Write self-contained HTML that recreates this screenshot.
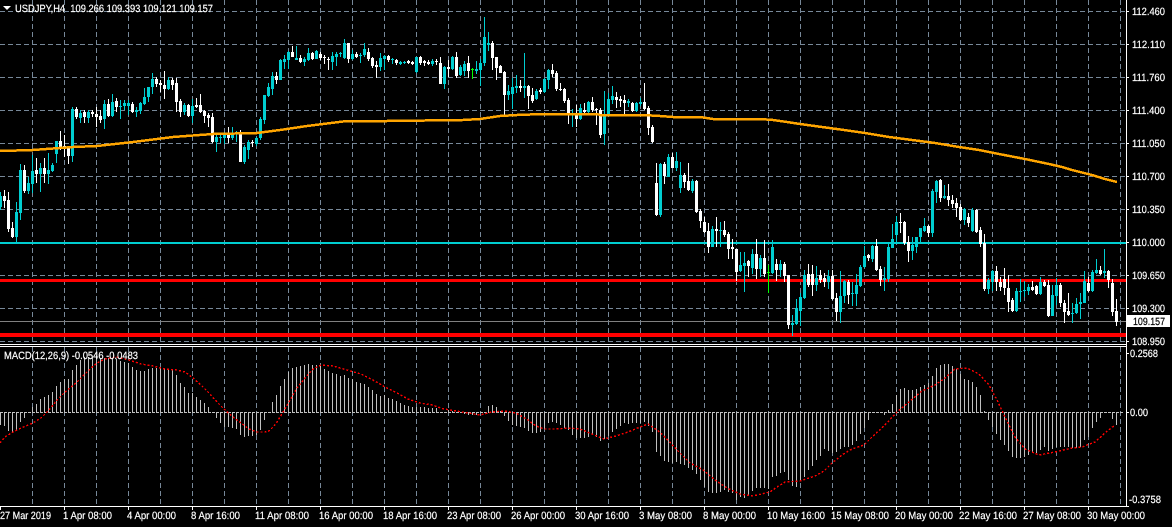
<!DOCTYPE html>
<html><head><meta charset="utf-8"><title>USDJPY,H4</title>
<style>html,body{margin:0;padding:0;background:#000;width:1172px;height:527px;overflow:hidden}svg{display:block}text{font-family:"Liberation Sans",sans-serif;font-size:10.5px;fill:#fff;stroke:#fff;stroke-width:.2;white-space:pre;text-rendering:geometricPrecision}</style></head><body>
<svg width="1172" height="527" viewBox="0 0 1172 527" xmlns="http://www.w3.org/2000/svg">
<rect width="1172" height="527" fill="#000"/>
<g shape-rendering="crispEdges" fill="none">
<path stroke="#778899" stroke-dasharray="5 3" d="M0 11.5H1126M0 44.5H1126M0 77.5H1126M0 110.5H1126M0 143.5H1126M0 176.5H1126M0 209.5H1126M0 275.5H1126M0 308.5H1126M0 341.5H1126"/>
<path stroke="#778899" stroke-dasharray="5 3" d="M32.5 0V344M64.5 0V344M96.5 0V344M128.5 0V344M160.5 0V344M192.5 0V344M224.5 0V344M256.5 0V344M288.5 0V344M320.5 0V344M352.5 0V344M384.5 0V344M416.5 0V344M448.5 0V344M480.5 0V344M512.5 0V344M544.5 0V344M576.5 0V344M608.5 0V344M640.5 0V344M672.5 0V344M704.5 0V344M736.5 0V344M768.5 0V344M800.5 0V344M832.5 0V344M864.5 0V344M896.5 0V344M928.5 0V344M960.5 0V344M992.5 0V344M1024.5 0V344M1056.5 0V344M1088.5 0V344M1120.5 0V344"/>
<path stroke="#778899" stroke-dasharray="5 3" d="M32.5 347V506M64.5 347V506M96.5 347V506M128.5 347V506M160.5 347V506M192.5 347V506M224.5 347V506M256.5 347V506M288.5 347V506M320.5 347V506M352.5 347V506M384.5 347V506M416.5 347V506M448.5 347V506M480.5 347V506M512.5 347V506M544.5 347V506M576.5 347V506M608.5 347V506M640.5 347V506M672.5 347V506M704.5 347V506M736.5 347V506M768.5 347V506M800.5 347V506M832.5 347V506M864.5 347V506M896.5 347V506M928.5 347V506M960.5 347V506M992.5 347V506M1024.5 347V506M1056.5 347V506M1088.5 347V506M1120.5 347V506"/>
<path stroke="#808080" d="M0 321.5H1126"/>
<path stroke="#00CED1" stroke-width="2" d="M0 243H1126"/>
<path stroke="#FF0000" stroke-width="3" d="M0 280.5H1126"/>
<path stroke="#FF0000" stroke-width="4" d="M0 335H1126"/>
<path stroke="#00CED1" d="M.5 192V210M16.5 202V243M20.5 164V220M28.5 177V194M32.5 155V193M40.5 163V192M48.5 153V184M52.5 163V172M56.5 141V163M72.5 107V162M80.5 110V123M88.5 110V123M104.5 100V129M112.5 94V117M120.5 100V119M124.5 100V110M128.5 100V115M136.5 107V117M140.5 102V114M144.5 88V105M148.5 87V102M152.5 73V94M168.5 77V90M184.5 103V115M192.5 99V123M216.5 135V152M220.5 135V143M224.5 132V144M232.5 127V140M236.5 131V142M244.5 145V164M248.5 140V159M256.5 137V146M260.5 117V140M264.5 95V124M268.5 83V97M272.5 72V95M280.5 59V80M284.5 55V69M288.5 51V69M296.5 46V60M304.5 57V66M308.5 48V61M316.5 50V59M332.5 52V70M336.5 52V66M340.5 52V57M344.5 39V59M352.5 50V60M360.5 53V63M364.5 43V57M380.5 53V71M384.5 55V70M392.5 58V64M400.5 61V65M404.5 61V64M416.5 57V73M432.5 59V66M444.5 66V89M452.5 56V70M460.5 65V76M464.5 61V76M476.5 61V74M480.5 59V86M484.5 17V66M488.5 32V51M508.5 85V100M512.5 78V109M516.5 75V93M524.5 53V98M536.5 89V100M544.5 78V93M548.5 69V89M572.5 109V127M580.5 104V120M588.5 101V113M604.5 91V145M608.5 93V115M612.5 86V104M628.5 99V107M636.5 102V112M640.5 98V106M660.5 163V217M668.5 154V177M676.5 152V171M680.5 162V193M692.5 179V193M712.5 226V247M720.5 222V247M740.5 252V272M744.5 252V292M752.5 249V274M760.5 255V277M772.5 240V274M780.5 260V277M792.5 315V336M796.5 299V325M800.5 293V326M804.5 270V299M816.5 266V291M828.5 270V289M840.5 271V323M844.5 280V303M852.5 282V306M856.5 274V306M860.5 265V287M864.5 246V268M872.5 245V262M884.5 267V291M888.5 243V282M892.5 224V248M896.5 216V243M912.5 237V260M916.5 237V253M920.5 228V243M924.5 218V232M932.5 189V237M936.5 180V203M944.5 185V199M964.5 208V225M972.5 208V232M988.5 278V294M992.5 270V291M1016.5 288V312M1020.5 279V302M1024.5 281V297M1028.5 284V295M1040.5 277V295M1052.5 285V316M1056.5 278V305M1072.5 303V323M1076.5 298V314M1080.5 293V319M1084.5 271V303M1092.5 270V292M1096.5 259V274M1104.5 249V278"/>
<path stroke="#00CED1" stroke-width="3" d="M.5 196V207M16.5 212V237M20.5 170V213M28.5 183V191M32.5 171V184M40.5 168V174M48.5 170V174M52.5 165V171M56.5 141V154M72.5 109V156M80.5 113V118M88.5 112V118M104.5 104V119M112.5 102V116M120.5 106V107M124.5 103V106M128.5 103V106M136.5 110V112M140.5 103V111M144.5 97V104M148.5 87V97M152.5 79V87M168.5 80V89M184.5 105V112M192.5 106V116M216.5 137V142M220.5 137V138M224.5 135V138M232.5 135V138M236.5 133V134M244.5 147V162M248.5 142V150M256.5 138V144M260.5 119V138M264.5 95V120M268.5 87V96M272.5 76V89M280.5 60V80M284.5 59V62M288.5 52V60M296.5 58V60M304.5 59V62M308.5 53V60M316.5 51V59M332.5 56V62M336.5 54V57M340.5 53V54M344.5 43V58M352.5 54V59M360.5 55V56M364.5 49V55M380.5 58V67M384.5 56V59M392.5 59V60M400.5 62V64M404.5 62V63M416.5 57V72M432.5 61V64M444.5 67V84M452.5 57V69M460.5 67V75M464.5 64V71M476.5 69V71M480.5 63V70M484.5 37V63M488.5 43V45M508.5 91V95M512.5 87V94M516.5 86V88M524.5 86V88M536.5 91V99M544.5 79V92M548.5 70V80M572.5 114V115M580.5 108V119M588.5 102V112M604.5 115V134M608.5 99V115M612.5 96V100M628.5 101V103M636.5 103V111M640.5 102V104M660.5 164V215M668.5 157V177M676.5 161V168M680.5 175V188M692.5 181V191M712.5 229V247M720.5 230V231M740.5 265V271M744.5 263V266M752.5 254V268M760.5 258V269M772.5 247V273M780.5 264V270M792.5 323V325M796.5 308V324M800.5 297V311M804.5 275V298M816.5 278V285M828.5 276V282M840.5 296V312M844.5 281V296M852.5 293V294M856.5 285V294M860.5 267V286M864.5 256V267M872.5 246V259M884.5 278V280M888.5 247V279M892.5 239V248M896.5 222V235M912.5 245V251M916.5 237V247M920.5 228V237M924.5 226V231M932.5 191V233M936.5 181V192M944.5 196V198M964.5 209V220M972.5 210V231M988.5 280V289M992.5 271V282M1016.5 291V311M1020.5 291V292M1024.5 290V291M1028.5 287V291M1040.5 282V294M1052.5 295V316M1056.5 285V296M1072.5 313V314M1076.5 304V313M1080.5 302V304M1084.5 281V303M1092.5 272V291M1096.5 270V273M1104.5 271V273"/>
<path stroke="#fff" d="M4.5 190V208M8.5 192V232M12.5 222V238M24.5 165V193M36.5 158V183M44.5 158V183M60.5 131V150M64.5 135V157M68.5 147V164M76.5 107V119M84.5 110V123M92.5 110V117M96.5 107V127M100.5 110V123M108.5 99V117M116.5 98V112M132.5 102V113M156.5 77V87M160.5 80V92M164.5 71V99M172.5 78V90M176.5 78V112M180.5 99V117M188.5 104V117M196.5 98V108M200.5 94V113M204.5 110V123M208.5 113V127M212.5 113V143M228.5 127V143M240.5 130V162M252.5 140V147M276.5 72V84M292.5 46V57M300.5 55V63M312.5 52V60M320.5 52V60M324.5 55V64M328.5 57V70M348.5 43V63M356.5 52V58M368.5 48V61M372.5 57V68M376.5 61V78M388.5 55V62M396.5 59V65M408.5 60V64M412.5 61V65M420.5 56V65M424.5 60V66M428.5 60V65M436.5 59V65M440.5 57V84M448.5 60V77M456.5 52V78M468.5 56V78M492.5 41V70M496.5 57V80M500.5 65V73M504.5 71V115M520.5 80V92M528.5 85V109M532.5 88V103M540.5 88V94M552.5 64V77M556.5 71V91M560.5 83V91M564.5 88V103M568.5 98V124M576.5 105V127M584.5 103V113M592.5 97V112M596.5 108V125M600.5 108V138M616.5 92V108M620.5 96V107M624.5 95V114M632.5 102V112M644.5 83V110M648.5 106V135M652.5 125V143M656.5 163V216M664.5 162V184M672.5 153V168M684.5 173V188M688.5 163V191M696.5 180V213M700.5 209V228M704.5 217V233M708.5 223V253M716.5 217V247M724.5 221V237M728.5 232V259M732.5 239V259M736.5 249V281M748.5 260V277M756.5 239V279M764.5 240V277M776.5 259V281M784.5 262V282M788.5 275V329M808.5 264V287M812.5 265V296M820.5 270V283M824.5 273V287M832.5 270V300M836.5 293V321M848.5 280V304M868.5 254V261M876.5 239V271M880.5 266V286M900.5 213V233M904.5 221V245M908.5 236V262M928.5 225V237M940.5 179V202M948.5 184V206M952.5 195V208M956.5 198V217M960.5 204V221M968.5 213V227M976.5 209V233M980.5 227V247M984.5 234V291M996.5 266V291M1000.5 277V291M1004.5 268V295M1008.5 275V312M1012.5 298V312M1032.5 281V291M1036.5 285V295M1044.5 280V287M1048.5 280V317M1060.5 283V307M1064.5 300V323M1068.5 293V316M1088.5 277V292M1100.5 266V275M1108.5 270V288M1112.5 279V316M1116.5 299V326"/>
<path stroke="#fff" stroke-width="3" d="M4.5 196V201M8.5 200V229M12.5 228V237M24.5 170V191M36.5 170V174M44.5 168V174M60.5 141V148M64.5 146V147M68.5 148V156M76.5 109V117M84.5 112V117M92.5 112V114M96.5 114V117M100.5 116V120M108.5 104V116M116.5 101V107M132.5 104V112M156.5 79V84M160.5 83V85M164.5 85V89M172.5 80V85M176.5 83V102M180.5 101V112M188.5 105V116M196.5 105V107M200.5 105V112M204.5 111V116M208.5 115V118M212.5 117V142M228.5 133V138M240.5 133V162M252.5 142V143M276.5 76V80M292.5 52V57M300.5 58V62M312.5 53V59M320.5 54V58M324.5 57V58M328.5 59V60M348.5 43V59M356.5 54V57M368.5 52V59M372.5 58V66M376.5 65V67M388.5 56V60M396.5 60V63M408.5 61V63M412.5 62V64M420.5 57V63M424.5 61V63M428.5 62V64M436.5 61V62M440.5 63V84M448.5 67V69M456.5 57V76M468.5 63V71M492.5 43V58M496.5 57V68M500.5 66V73M504.5 72V95M520.5 86V88M528.5 86V96M532.5 95V101M540.5 90V92M552.5 70V74M556.5 73V89M560.5 89V90M564.5 89V101M568.5 100V114M576.5 115V119M584.5 110V112M592.5 102V110M596.5 109V110M600.5 110V135M616.5 97V100M620.5 99V101M624.5 100V103M632.5 103V111M644.5 102V109M648.5 108V128M652.5 127V142M656.5 183V215M664.5 164V176M672.5 157V168M684.5 175V182M688.5 181V190M696.5 181V212M700.5 211V221M704.5 222V232M708.5 231V247M716.5 229V231M724.5 230V235M728.5 234V249M732.5 247V249M736.5 249V272M748.5 261V266M756.5 254V269M764.5 258V274M776.5 264V270M784.5 264V276M788.5 275V325M808.5 274V285M812.5 274V285M820.5 275V280M824.5 278V282M832.5 276V299M836.5 298V312M848.5 282V295M868.5 255V258M876.5 246V270M880.5 269V280M900.5 222V223M904.5 222V243M908.5 242V251M928.5 226V233M940.5 180V198M948.5 196V200M952.5 200V204M956.5 203V208M960.5 207V220M968.5 217V223M976.5 210V232M980.5 230V244M984.5 243V289M996.5 271V282M1000.5 282V287M1004.5 279V288M1008.5 288V302M1012.5 300V311M1032.5 287V290M1036.5 286V294M1044.5 282V286M1048.5 285V316M1060.5 285V303M1064.5 303V312M1068.5 311V315M1088.5 283V291M1100.5 270V274M1108.5 271V280M1112.5 283V312M1116.5 311V322"/>
<path stroke="#00FF00" d="M472.5 68V79M768.5 265V293"/>
<path stroke="#00FF00" stroke-width="3" d="M472.5 69V70M768.5 272V273"/>
<path stroke="#FFA500" stroke-width="2.5" d="M0 151L33 150L73 147L97 146L133 142L173 137L213 134L257 133L280 130L307 126L347 121L387 121L463 120L480 119L500 116L517 115L543 114L597 114L600 115L643 115L660 116L673 117L700 117L713 119L760 119L773 120L787 122L800 124L844 130L865 133L889 137L912 140L935 143L959 147L979 150L999 154L1025 159L1049 164L1062 167L1072 170L1092 175L1105 179L1117 182"/>
<path stroke="#fff" d="M0 344.5H1126M0 346.5H1126M0 506.5H1129M1126.5 0V507"/>
<path stroke="#fff" d="M1126 11.5H1129M1126 44.5H1129M1126 77.5H1129M1126 110.5H1129M1126 143.5H1129M1126 176.5H1129M1126 209.5H1129M1126 242.5H1129M1126 275.5H1129M1126 308.5H1129M1126 341.5H1129M1126 353.5H1129M1126 412.5H1129M.5 507V510M64.5 507V510M128.5 507V510M192.5 507V510M256.5 507V510M320.5 507V510M384.5 507V510M448.5 507V510M512.5 507V510M576.5 507V510M640.5 507V510M704.5 507V510M768.5 507V510M832.5 507V510M896.5 507V510M960.5 507V510M1024.5 507V510M1088.5 507V510"/>
<path stroke="#c0c0c0" d="M.5 412V425M4.5 412V426M8.5 412V431M12.5 412V433M16.5 412V431M20.5 412V422M24.5 412V418M28.5 412V413M32.5 413V407M36.5 413V404M40.5 413V399M44.5 413V397M48.5 413V395M52.5 413V392M56.5 413V386M60.5 413V382M64.5 413V379M68.5 413V379M72.5 413V370M76.5 413V365M80.5 413V360M84.5 413V357M88.5 413V357M92.5 413V357M96.5 413V356M100.5 413V358M104.5 413V358M108.5 413V358M112.5 413V358M116.5 413V359M120.5 413V361M124.5 413V362M128.5 413V363M132.5 413V367M136.5 413V370M140.5 413V371M144.5 413V371M148.5 413V369M152.5 413V368M156.5 413V368M160.5 413V368M164.5 413V369M168.5 413V369M172.5 413V370M176.5 413V375M180.5 413V383M184.5 413V387M188.5 413V393M192.5 413V393M196.5 413V397M200.5 413V400M204.5 413V403M208.5 413V407M212.5 412V413M216.5 412V418M220.5 412V423M224.5 412V427M228.5 412V427M232.5 412V428M236.5 412V429M240.5 412V435M244.5 412V437M248.5 412V436M252.5 412V436M256.5 412V435M260.5 412V430M264.5 412V420M268.5 412V413M272.5 413V402M276.5 413V395M280.5 413V386M284.5 413V379M288.5 413V372M292.5 413V368M296.5 413V367M300.5 413V366M304.5 413V365M308.5 413V364M312.5 413V365M316.5 413V365M320.5 413V366M324.5 413V369M328.5 413V371M332.5 413V373M336.5 413V374M340.5 413V376M344.5 413V375M348.5 413V378M352.5 413V379M356.5 413V382M360.5 413V383M364.5 413V384M368.5 413V387M372.5 413V390M376.5 413V394M380.5 413V396M384.5 413V395M388.5 413V398M392.5 413V399M396.5 413V401M400.5 413V403M404.5 413V405M408.5 413V406M412.5 413V407M416.5 413V407M420.5 413V407M424.5 413V407M428.5 413V408M432.5 413V408M436.5 413V408M440.5 412V413M444.5 412V413M448.5 413V410M452.5 413V411M456.5 412V413M460.5 412V413M464.5 412V414M468.5 412V415M472.5 412V415M476.5 412V415M480.5 412V413M484.5 412V413M488.5 413V406M492.5 413V405M496.5 413V407M500.5 413V411M504.5 412V416M508.5 412V421M512.5 412V425M516.5 412V426M520.5 412V427M524.5 412V428M528.5 412V431M532.5 412V433M536.5 412V433M540.5 412V432M544.5 412V429M548.5 412V423M552.5 412V422M556.5 412V423M560.5 412V425M564.5 412V428M568.5 412V430M572.5 412V435M576.5 412V438M580.5 412V438M584.5 412V438M588.5 412V437M592.5 412V435M596.5 412V437M600.5 412V441M604.5 412V439M608.5 412V436M612.5 412V432M616.5 412V429M620.5 412V426M624.5 412V423M628.5 412V424M632.5 412V423M636.5 412V423M640.5 412V423M644.5 412V422M648.5 412V426M652.5 412V432M656.5 412V452M660.5 412V456M664.5 412V461M668.5 412V462M672.5 412V463M676.5 412V462M680.5 412V464M684.5 412V465M688.5 412V468M692.5 412V470M696.5 412V474M700.5 412V480M704.5 412V487M708.5 412V492M712.5 412V493M716.5 412V493M720.5 412V492M724.5 412V490M728.5 412V492M732.5 412V493M736.5 412V500M740.5 412V497M744.5 412V498M748.5 412V495M752.5 412V491M756.5 412V488M760.5 412V488M764.5 412V488M768.5 412V489M772.5 412V477M776.5 412V476M780.5 412V473M784.5 412V472M788.5 412V480M792.5 412V486M796.5 412V487M800.5 412V480M804.5 412V477M808.5 412V470M812.5 412V466M816.5 412V460M820.5 412V456M824.5 412V449M828.5 412V451M832.5 412V453M836.5 412V452M840.5 412V449M844.5 412V447M848.5 412V447M852.5 412V445M856.5 412V441M860.5 412V434M864.5 412V428M868.5 412V420M872.5 412V413M876.5 412V413M880.5 412V413M884.5 412V415M888.5 413V410M892.5 413V404M896.5 413V395M900.5 413V389M904.5 413V388M908.5 413V390M912.5 413V390M916.5 413V389M920.5 413V387M924.5 413V385M928.5 413V383M932.5 413V376M936.5 413V368M940.5 413V365M944.5 413V364M948.5 413V364M952.5 413V366M956.5 413V369M960.5 413V374M964.5 413V379M968.5 413V380M972.5 413V382M976.5 413V387M980.5 413V395M984.5 413V411M988.5 412V420M992.5 412V427M996.5 412V434M1000.5 412V440M1004.5 412V445M1008.5 412V451M1012.5 412V457M1016.5 412V458M1020.5 412V458M1024.5 412V457M1028.5 412V455M1032.5 412V452M1036.5 412V453M1040.5 412V450M1044.5 412V447M1048.5 412V451M1052.5 412V449M1056.5 412V447M1060.5 412V447M1064.5 412V447M1068.5 412V447M1072.5 412V448M1076.5 412V448M1080.5 412V447M1084.5 412V440M1088.5 412V437M1092.5 412V428M1096.5 412V422M1100.5 412V418M1104.5 412V413M1108.5 412V413M1112.5 412V419M1116.5 412V425"/>
<path stroke="#c0c0c0" stroke-dasharray="3 1" d="M0 412.5H1124"/>
<path stroke="#FF0000" stroke-width="1.4" stroke-dasharray="2 2" d="M0 443L5 437L13 432L21 428L33 423L41 418L49 410L57 400L65 392L77 382L89 370L97 363L105 359L117 357L129 360L141 364L153 366L165 369L177 370L185 372L193 378L201 385L209 393L217 402L225 410L233 417L241 423L249 429L257 432L265 432L269 431L273 427L277 422L283 412L289 402L297 388L305 378L313 369L321 365L333 366L347 370L361 374L373 380L385 387L397 393L408 399L420 403L432 405L444 409L456 411L468 413L480 415L492 412L504 411L516 413L528 420L536 426L544 429L556 429L568 428L580 429L592 434L604 439L616 436L628 432L640 427L648 424L657 430L665 437L677 450L690 463L703 470L715 480L727 488L740 494L753 496L770 492L777 487L785 482L800 481L815 476L824 471L832 463L842 455L852 449L864 445L872 437L885 425L897 412L909 402L922 391L935 385L945 378L955 369L967 368L979 374L989 385L997 400L1005 417L1015 437L1025 449L1039 455L1055 452L1072 448L1082 447L1095 442L1105 433L1115 425"/>
<rect x="1127" y="315" width="43" height="12" fill="#fff"/>
</g>
<path d="M3 6H11L7 10Z" fill="#fff"/>
<g>
<text x="15" y="12" textLength="198" lengthAdjust="spacingAndGlyphs">USDJPY,H4  109.266 109.393 109.121 109.157</text>
<text x="4" y="359" textLength="134" lengthAdjust="spacingAndGlyphs">MACD(12,26,9) -0.0546 -0.0483</text>
<text x="1132" y="15" textLength="33" lengthAdjust="spacingAndGlyphs">112.460</text>
<text x="1132" y="48" textLength="33" lengthAdjust="spacingAndGlyphs">112.110</text>
<text x="1132" y="81" textLength="33" lengthAdjust="spacingAndGlyphs">111.760</text>
<text x="1132" y="114" textLength="33" lengthAdjust="spacingAndGlyphs">111.400</text>
<text x="1132" y="147" textLength="33" lengthAdjust="spacingAndGlyphs">111.050</text>
<text x="1132" y="180" textLength="33" lengthAdjust="spacingAndGlyphs">110.700</text>
<text x="1132" y="213" textLength="33" lengthAdjust="spacingAndGlyphs">110.350</text>
<text x="1132" y="246" textLength="33" lengthAdjust="spacingAndGlyphs">110.000</text>
<text x="1132" y="279" textLength="33" lengthAdjust="spacingAndGlyphs">109.650</text>
<text x="1132" y="312" textLength="33" lengthAdjust="spacingAndGlyphs">109.300</text>
<text x="1132" y="345" textLength="33" lengthAdjust="spacingAndGlyphs">108.950</text>
<text x="1133" y="325" textLength="32" lengthAdjust="spacingAndGlyphs" style="fill:#000;stroke:#000">109.157</text>
<text x="1130" y="357" textLength="28" lengthAdjust="spacingAndGlyphs">0.2568</text>
<text x="1130" y="416" textLength="18" lengthAdjust="spacingAndGlyphs">0.00</text>
<text x="1129" y="503" textLength="32" lengthAdjust="spacingAndGlyphs">-0.3758</text>
<text x="0" y="519" textLength="51" lengthAdjust="spacingAndGlyphs">27 Mar 2019</text>
<text x="63" y="519" textLength="49" lengthAdjust="spacingAndGlyphs">1 Apr 08:00</text>
<text x="127" y="519" textLength="49" lengthAdjust="spacingAndGlyphs">4 Apr 00:00</text>
<text x="191" y="519" textLength="49" lengthAdjust="spacingAndGlyphs">8 Apr 16:00</text>
<text x="255" y="519" textLength="54" lengthAdjust="spacingAndGlyphs">11 Apr 08:00</text>
<text x="319" y="519" textLength="54" lengthAdjust="spacingAndGlyphs">16 Apr 00:00</text>
<text x="383" y="519" textLength="54" lengthAdjust="spacingAndGlyphs">18 Apr 16:00</text>
<text x="447" y="519" textLength="54" lengthAdjust="spacingAndGlyphs">23 Apr 08:00</text>
<text x="511" y="519" textLength="54" lengthAdjust="spacingAndGlyphs">26 Apr 00:00</text>
<text x="575" y="519" textLength="54" lengthAdjust="spacingAndGlyphs">30 Apr 16:00</text>
<text x="639" y="519" textLength="53" lengthAdjust="spacingAndGlyphs">3 May 08:00</text>
<text x="703" y="519" textLength="53" lengthAdjust="spacingAndGlyphs">8 May 00:00</text>
<text x="767" y="519" textLength="58" lengthAdjust="spacingAndGlyphs">10 May 16:00</text>
<text x="831" y="519" textLength="58" lengthAdjust="spacingAndGlyphs">15 May 08:00</text>
<text x="895" y="519" textLength="58" lengthAdjust="spacingAndGlyphs">20 May 00:00</text>
<text x="959" y="519" textLength="58" lengthAdjust="spacingAndGlyphs">22 May 16:00</text>
<text x="1023" y="519" textLength="58" lengthAdjust="spacingAndGlyphs">27 May 08:00</text>
<text x="1087" y="519" textLength="58" lengthAdjust="spacingAndGlyphs">30 May 00:00</text>
</g>
</svg>
</body></html>
